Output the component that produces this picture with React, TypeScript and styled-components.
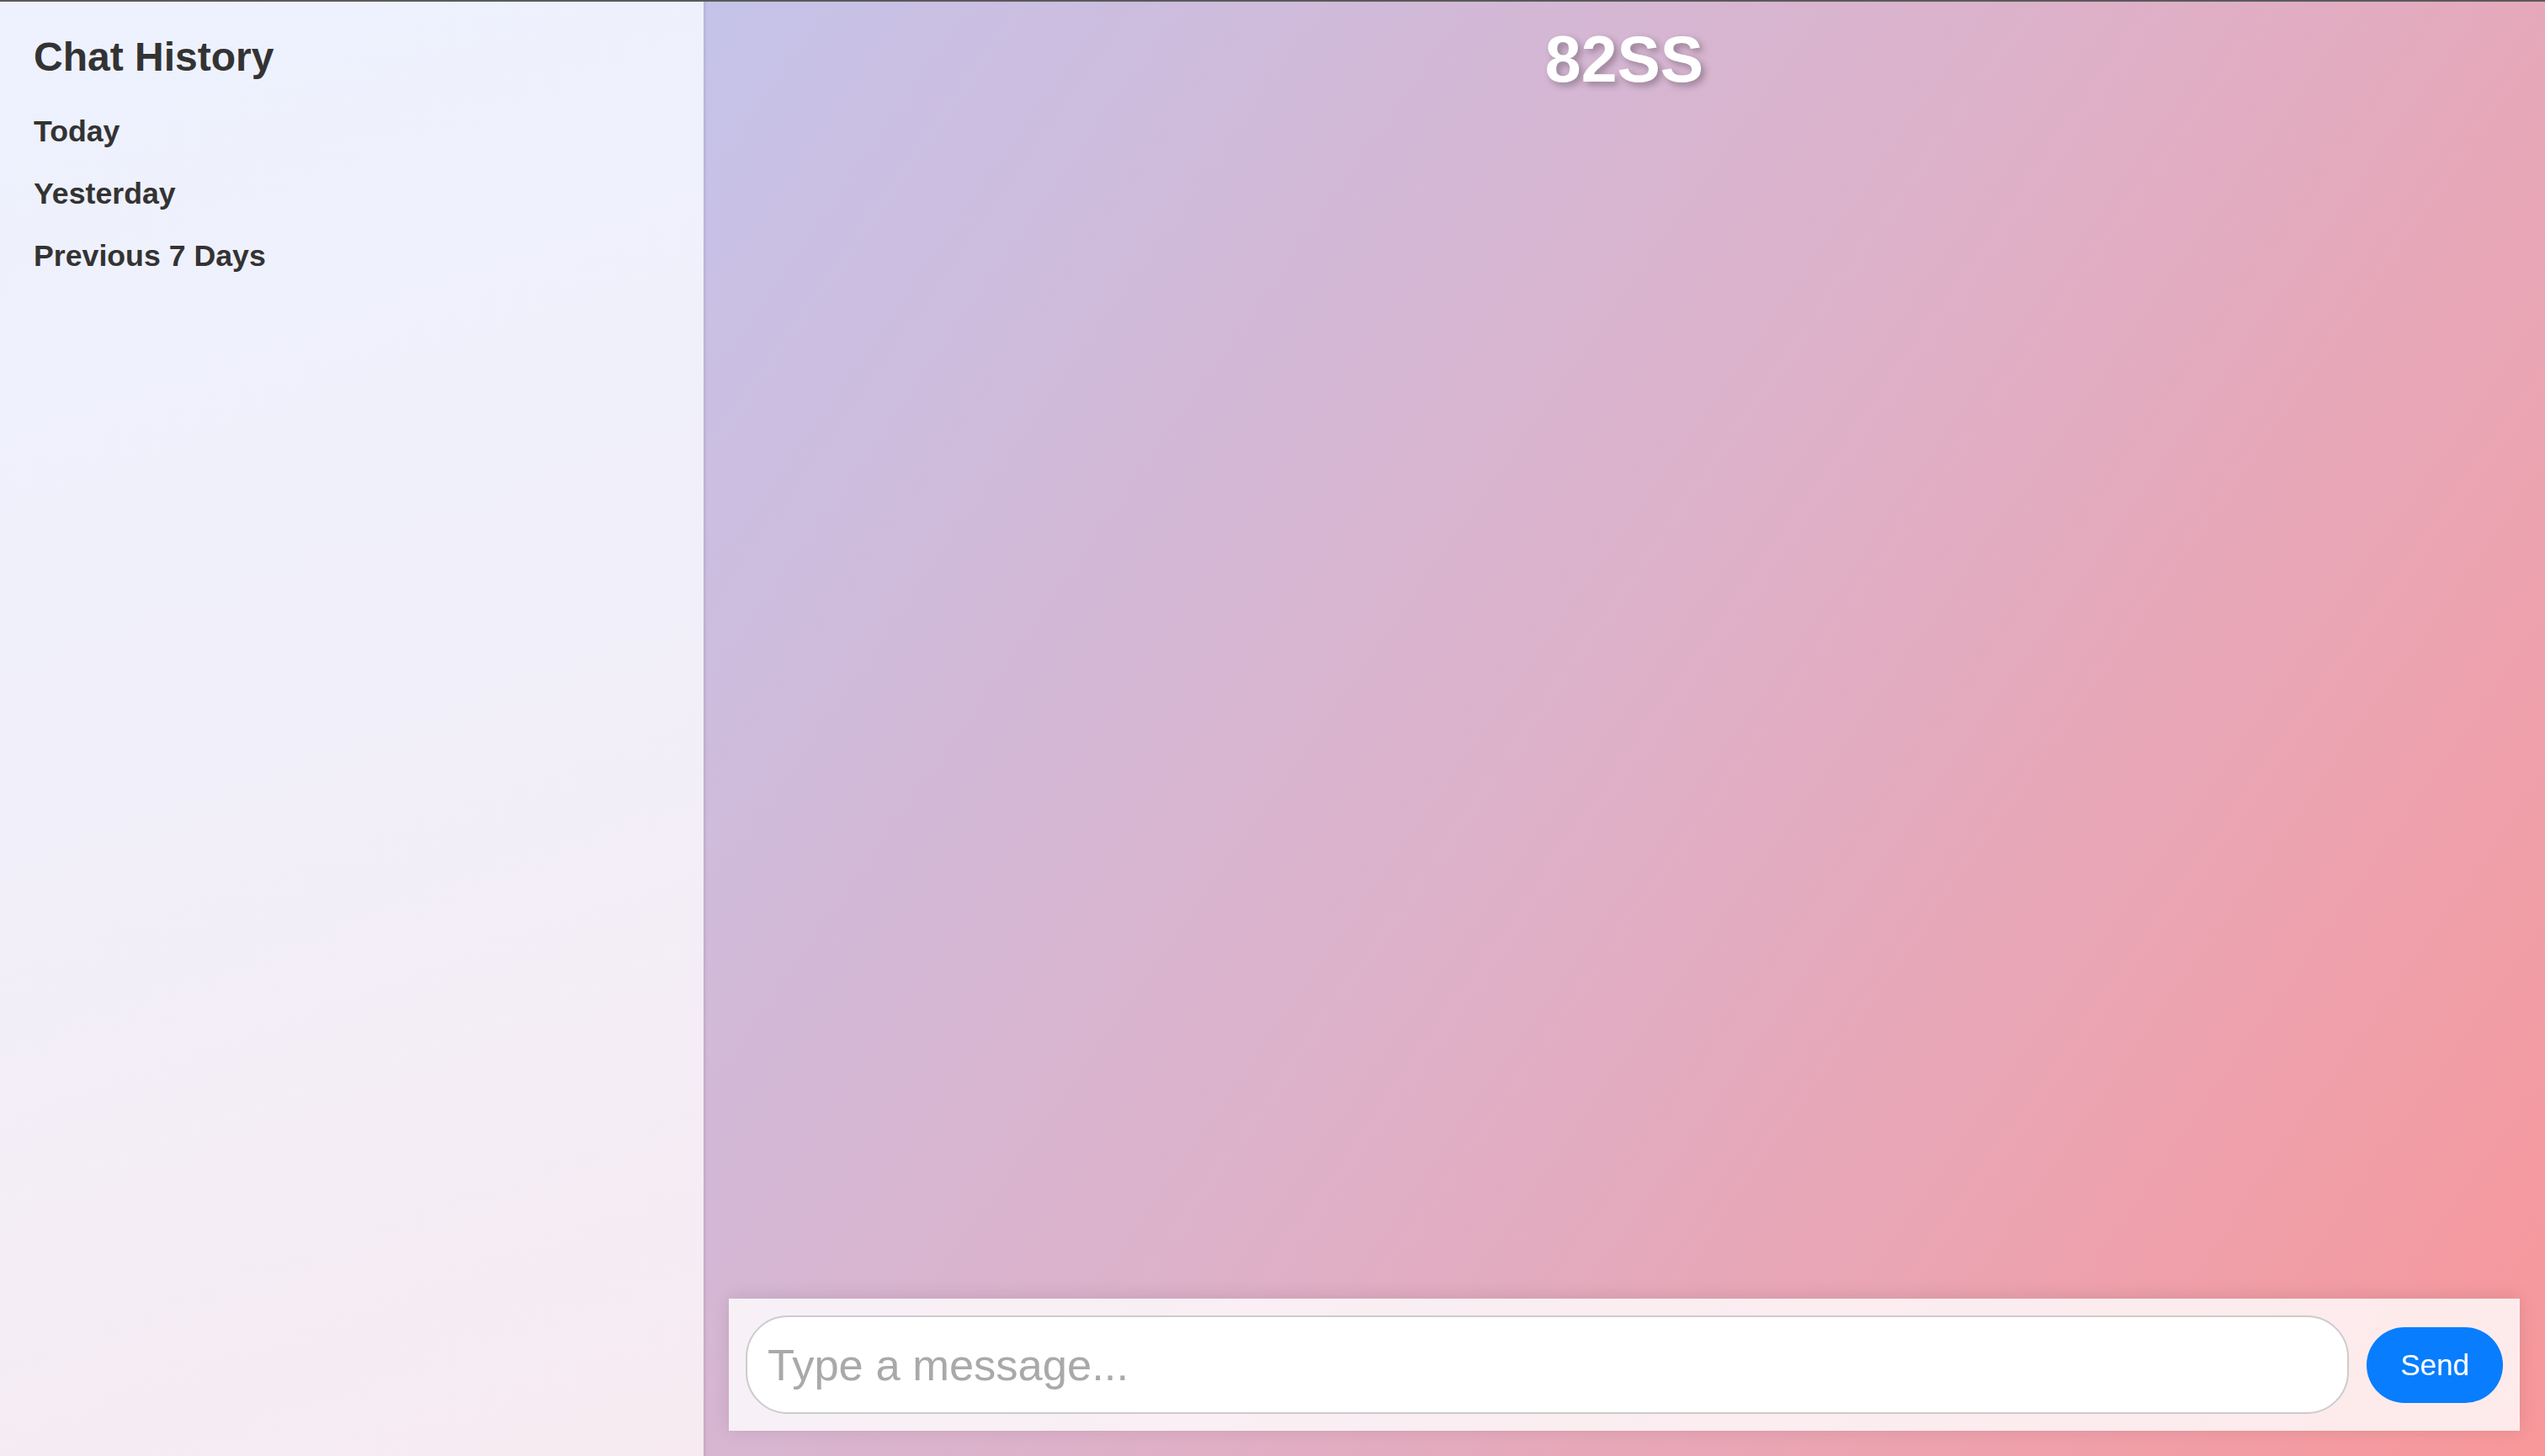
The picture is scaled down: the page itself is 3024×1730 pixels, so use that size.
import * as React from "react"
import styled, {createGlobalStyle} from "styled-components";

const GlobalStyle = createGlobalStyle`
  html, body {
    margin: 0;
    padding: 0;
  }
  body {
    font-family: "Liberation Sans", Arial, Helvetica, sans-serif;
    color: #333;
  }
  * {
    box-sizing: border-box;
  }
`;

const AppWrapper = styled.div`
  display: flex;
  width: 100%;
  height: 100vh;
  border-top: 2px solid #5a5a5a;
  overflow: hidden;
`;

const Sidebar = styled.aside`
  position: relative;
  z-index: 1;
  flex: 0 0 836px;
  padding: 38px 40px;
  background: linear-gradient(160deg, #edf2fe 0%, #f1eff9 50%, #f7ebf1 100%);
  box-shadow: 2px 0 3px rgba(60, 40, 90, 0.12);
`;

const SidebarTitle = styled.h2`
  margin: 0;
  font-size: 48px;
  font-weight: 700;
  line-height: 56px;
  color: #333;
`;

const HistoryList = styled.ul`
  list-style: none;
  margin: 23px 0 0;
  padding: 0;
`;

const HistoryItem = styled.li`
  padding: 17px 0;
  font-size: 35.7px;
  font-weight: 700;
  line-height: 40px;
  color: #333;
  cursor: pointer;
`;

const Main = styled.main`
  flex: 1;
  display: flex;
  flex-direction: column;
  padding: 24px 30px 30px;
  background: linear-gradient(125deg, #c5c3e9 0%, #deb0c8 50%, #f8979a 100%);
`;

const Title = styled.h1`
  margin: 0;
  text-align: center;
  font-size: 77px;
  font-weight: 700;
  line-height: 88px;
  color: #fff;
  text-shadow: 4px 4px 8px rgba(0, 0, 0, 0.3);
`;

const Messages = styled.div`
  flex: 1;
`;

const InputBar = styled.div`
  display: flex;
  align-items: center;
  gap: 21px;
  padding: 20px;
  background: rgba(255, 255, 255, 0.8);
  box-shadow: 0 -2px 20px rgba(0, 0, 0, 0.1);
`;

const MessageInput = styled.input`
  flex: 1;
  height: 117px;
  padding: 0 24px;
  border: 2px solid #ccc;
  border-radius: 50px;
  background: #fff;
  font-family: "Liberation Sans", Arial, sans-serif;
  font-size: 52.5px;
  color: #333;
  outline: none;

  &::placeholder {
    color: #a9a9a9;
  }
`;

const SendButton = styled.button`
  padding: 0 40px;
  height: 90px;
  border: none;
  border-radius: 45px;
  background: #087dfd;
  color: #fff;
  font-family: "Liberation Sans", Arial, sans-serif;
  font-size: 35px;
  cursor: pointer;
`;

const historyGroups = ["Today", "Yesterday", "Previous 7 Days"];

const App = () => {
  const [text, setText] = React.useState("");

  return (
    <>
      <GlobalStyle/>
      <AppWrapper>
        <Sidebar>
          <SidebarTitle>Chat History</SidebarTitle>
          <HistoryList>
            {historyGroups.map(g => (
              <HistoryItem key={g}>{g}</HistoryItem>
            ))}
          </HistoryList>
        </Sidebar>
        <Main>
          <Title>82SS</Title>
          <Messages/>
          <InputBar>
            <MessageInput
              placeholder="Type a message..."
              value={text}
              onChange={e => setText(e.target.value)}
            />
            <SendButton onClick={() => setText("")}>Send</SendButton>
          </InputBar>
        </Main>
      </AppWrapper>
    </>
  )
}

export default App
